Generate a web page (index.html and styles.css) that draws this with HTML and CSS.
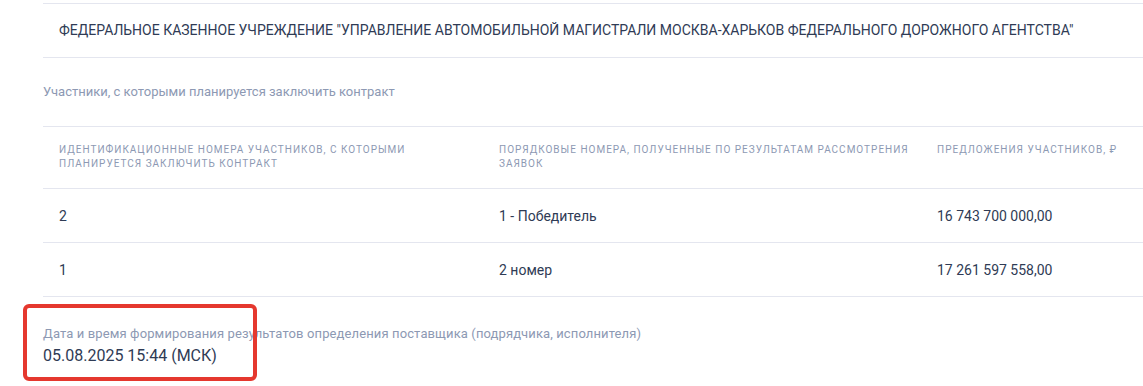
FILE: index.html
```html
<!DOCTYPE html>
<html lang="ru">
<head>
<meta charset="utf-8">
<link rel="stylesheet" href="styles.css">
</head>
<body>
<div class="page">
  <div class="title-row">ФЕДЕРАЛЬНОЕ КАЗЕННОЕ УЧРЕЖДЕНИЕ "УПРАВЛЕНИЕ АВТОМОБИЛЬНОЙ МАГИСТРАЛИ МОСКВА-ХАРЬКОВ ФЕДЕРАЛЬНОГО ДОРОЖНОГО АГЕНТСТВА"</div>
  <div class="section-label">Участники, с которыми планируется заключить контракт</div>
  <table class="tbl">
    <thead>
      <tr>
        <th class="c1">Идентификационные номера участников, с которыми планируется заключить контракт</th>
        <th class="c2">Порядковые номера, полученные по результатам рассмотрения заявок</th>
        <th class="c3">Предложения участников, ₽</th>
      </tr>
    </thead>
    <tbody>
      <tr><td>2</td><td>1 - Победитель</td><td>16 743 700 000,00</td></tr>
      <tr><td>1</td><td>2 номер</td><td>17 261 597 558,00</td></tr>
    </tbody>
  </table>
  <div class="result">
    <div class="result-label">Дата и время формирования результатов определения поставщика (подрядчика, исполнителя)</div>
    <div class="result-value">05.08.2025 15:44 (МСК)</div>
    <div class="highlight"></div>
  </div>
</div>
</body>
</html>
```
FILE: styles.css
```css
html, body {
  margin: 0;
  padding: 0;
  background: #ffffff;
}
body {
  font-family: Roboto, "Liberation Sans", Arial, sans-serif;
  color: #2f3b55;
  overflow: hidden;
}
.page {
  margin-left: 43px;
  padding-top: 3px;
}
.title-row {
  border-top: 1px solid #e4e6ef;
  border-bottom: 1px solid #e4e6ef;
  padding: 16px 16px 16px 16px;
  height: 21px;
  line-height: 21px;
  font-size: 14px;
  color: #2f3b55;
  white-space: nowrap;
}
.section-label {
  height: 68px;
  line-height: 68px;
  font-size: 13px;
  color: #8d99b3;
}
.tbl {
  width: 1100px;
  border-collapse: collapse;
  table-layout: fixed;
}
.tbl th, .tbl td {
  text-align: left;
  padding: 0 8px 0 16px;
  border-top: 1px solid #e4e6ef;
  border-bottom: 1px solid #e4e6ef;
}
.tbl th {
  height: 62px;
  box-sizing: border-box;
  font-weight: 400;
  font-size: 10px;
  line-height: 14px;
  letter-spacing: 1px;
  text-transform: uppercase;
  color: #8d99b3;
  vertical-align: top;
  padding-top: 16px;
}
.tbl th.c1 { width: 440px; }
.tbl th.c2 { width: 438px; }
.tbl td {
  height: 53px;
  font-size: 14px;
  color: #2f3b55;
  vertical-align: middle;
}
.result {
  position: relative;
  padding-top: 28px;
  height: 60px;
}
.result-label {
  font-size: 13px;
  line-height: 18px;
  letter-spacing: 0.12px;
  color: #8d99b3;
}
.result-value {
  font-size: 16px;
  line-height: 22px;
  margin-top: 2px;
  color: #2f3b55;
}
.highlight {
  position: absolute;
  left: -20px;
  top: 7px;
  width: 226px;
  height: 69px;
  border: 4px solid #e5382e;
  border-radius: 6px;
}
```
